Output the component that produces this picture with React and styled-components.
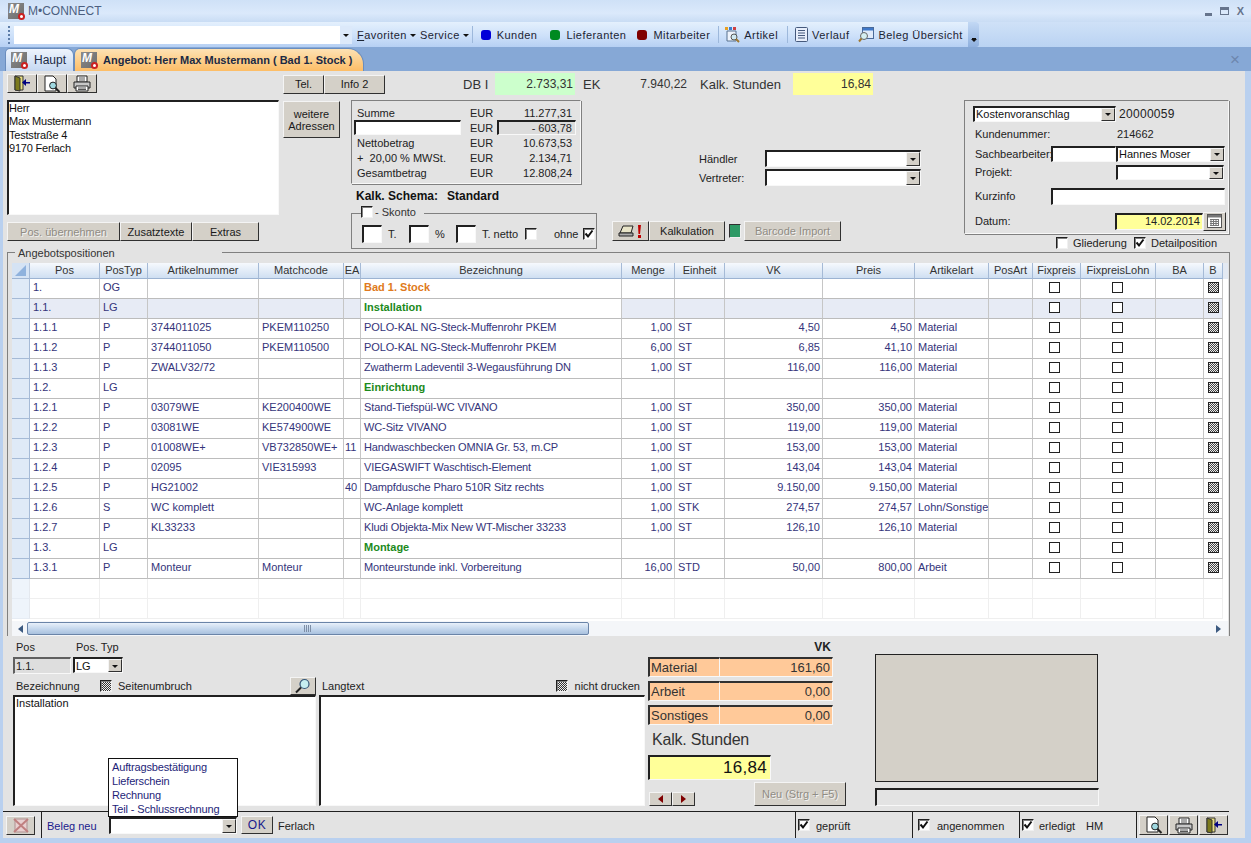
import React from "react";
import styled, { createGlobalStyle, css } from "styled-components";

const rows = [
  { pos: "1.", typ: "OG", bez: "Bad 1. Stock", kind: "title" },
  { pos: "1.1.", typ: "LG", bez: "Installation", kind: "group", active: true },
  { pos: "1.1.1", typ: "P", art: "3744011025", match: "PKEM110250", bez: "POLO-KAL NG-Steck-Muffenrohr PKEM", menge: "1,00", einheit: "ST", vk: "4,50", preis: "4,50", artart: "Material" },
  { pos: "1.1.2", typ: "P", art: "3744011050", match: "PKEM110500", bez: "POLO-KAL NG-Steck-Muffenrohr PKEM", menge: "6,00", einheit: "ST", vk: "6,85", preis: "41,10", artart: "Material" },
  { pos: "1.1.3", typ: "P", art: "ZWALV32/72", bez: "Zwatherm Ladeventil 3-Wegausführung DN", menge: "1,00", einheit: "ST", vk: "116,00", preis: "116,00", artart: "Material" },
  { pos: "1.2.", typ: "LG", bez: "Einrichtung", kind: "group" },
  { pos: "1.2.1", typ: "P", art: "03079WE", match: "KE200400WE", bez: "Stand-Tiefspül-WC VIVANO", menge: "1,00", einheit: "ST", vk: "350,00", preis: "350,00", artart: "Material" },
  { pos: "1.2.2", typ: "P", art: "03081WE", match: "KE574900WE", bez: "WC-Sitz VIVANO", menge: "1,00", einheit: "ST", vk: "119,00", preis: "119,00", artart: "Material" },
  { pos: "1.2.3", typ: "P", art: "01008WE+", match: "VB732850WE+", ea: "11", bez: "Handwaschbecken OMNIA Gr. 53, m.CP", menge: "1,00", einheit: "ST", vk: "153,00", preis: "153,00", artart: "Material" },
  { pos: "1.2.4", typ: "P", art: "02095", match: "VIE315993", bez: "VIEGASWIFT Waschtisch-Element", menge: "1,00", einheit: "ST", vk: "143,04", preis: "143,04", artart: "Material" },
  { pos: "1.2.5", typ: "P", art: "HG21002", ea: "40", bez: "Dampfdusche Pharo 510R Sitz rechts", menge: "1,00", einheit: "ST", vk: "9.150,00", preis: "9.150,00", artart: "Material" },
  { pos: "1.2.6", typ: "S", art: "WC komplett", bez: "WC-Anlage komplett", menge: "1,00", einheit: "STK", vk: "274,57", preis: "274,57", artart: "Lohn/Sonstige" },
  { pos: "1.2.7", typ: "P", art: "KL33233", bez: "Kludi Objekta-Mix New WT-Mischer 33233", menge: "1,00", einheit: "ST", vk: "126,10", preis: "126,10", artart: "Material" },
  { pos: "1.3.", typ: "LG", bez: "Montage", kind: "group" },
  { pos: "1.3.1", typ: "P", art: "Monteur", match: "Monteur", bez: "Monteurstunde inkl. Vorbereitung", menge: "16,00", einheit: "STD", vk: "50,00", preis: "800,00", artart: "Arbeit" },
];

const columns = [
  ["Pos", 70], ["PosTyp", 48], ["Artikelnummer", 111], ["Matchcode", 85], ["EA", 17],
  ["Bezeichnung", 261], ["Menge", 53], ["Einheit", 50], ["VK", 98], ["Preis", 92],
  ["Artikelart", 74], ["PosArt", 44], ["Fixpreis", 48], ["FixpreisLohn", 75], ["BA", 48], ["B", 19],
];

const Logo = () => (
  <LogoBox>
    <LogoLetter>M</LogoLetter>
    <LogoDot />
  </LogoBox>
);

const DoorIcon = () => (
  <svg width="20" height="17" viewBox="0 0 20 17">
    <path d="M3 1h8v14H3z" fill="#e6dc80" stroke="#333" />
    <path d="M3 1l5 2v13l-5-1z" fill="#7c7a1c" stroke="#333" />
    <path d="M18 7h-4V4L10 7.500 14 11V8.500h4z" fill="#000080" />
  </svg>
);

const PreviewIcon = () => (
  <svg width="20" height="18" viewBox="0 0 20 18">
    <path d="M3 1h8l3 3v12H3z" fill="#fff" stroke="#222" />
    <circle cx="11" cy="10.500" r="3.400" fill="#9fd8e0" stroke="#222" />
    <path d="M13.500 13l4 4" stroke="#222" strokeWidth="2" />
  </svg>
);

const PrinterIcon = () => (
  <svg width="20" height="17" viewBox="0 0 20 17">
    <path d="M5 1h10v6H5z" fill="#fff" stroke="#222" />
    <path d="M2 7h16v6H2z" fill="#c8c8c8" stroke="#222" />
    <path d="M4 11h12v5H4z" fill="#fff" stroke="#222" />
    <path d="M6 13h8M6 14.500h8M7 3h6M7 5h6" stroke="#555" />
  </svg>
);

const SearchIcon = () => (
  <svg width="18" height="16" viewBox="0 0 18 16">
    <circle cx="10.500" cy="6" r="4.500" fill="#c6eef0" stroke="#357" strokeWidth="1.200" />
    <path d="M7 9.500L2 14.500" stroke="#222" strokeWidth="2" />
  </svg>
);

const ArtikelIcon = () => (
  <svg width="17" height="17" viewBox="0 0 17 17">
    <path d="M3 5h9v10H3z" fill="#eef3fb" stroke="#56708f" />
    <rect x="1" y="1" width="3" height="3" fill="#e8a020" />
    <rect x="5" y="1" width="3" height="3" fill="#3a7fd0" />
    <rect x="9" y="1" width="3" height="3" fill="#d04040" />
    <circle cx="10" cy="11" r="3" fill="#d0e8f0" stroke="#555" />
    <path d="M12 13l3 3" stroke="#a07830" strokeWidth="2" />
  </svg>
);

const VerlaufIcon = () => (
  <svg width="15" height="17" viewBox="0 0 15 17">
    <rect x="1.500" y="1.500" width="12" height="14" rx="1" fill="#e7eefb" stroke="#45597c" />
    <path d="M4 4.500h7M4 7h7M4 9.500h7M4 12h7" stroke="#45597c" />
  </svg>
);

const BelegIcon = () => (
  <svg width="17" height="17" viewBox="0 0 17 17">
    <rect x="4.500" y="1.500" width="11" height="11" fill="#dfeafa" stroke="#4a6a99" />
    <path d="M5 2h10v2.500H5z" fill="#3f78c9" />
    <circle cx="6" cy="10" r="3.500" fill="#d5eef0" stroke="#666" />
    <path d="M3.500 12.500L1 15.500" stroke="#a07830" strokeWidth="2" />
  </svg>
);

const AlertIcon = () => (
  <svg width="27" height="15" viewBox="0 0 27 15">
    <path d="M3 9l3-7h10l-2 7z" fill="#e8e4c8" stroke="#222" />
    <path d="M2 9h14v3H2z" fill="#aaa" stroke="#222" />
    <path d="M21 1h3l-1 9h-1.500z" fill="#c00000" />
    <rect x="21" y="11" width="3" height="3" fill="#c00000" />
  </svg>
);

const CloseXIcon = () => (
  <svg width="16" height="15" viewBox="0 0 16 15">
    <rect x="2" y="1" width="12" height="13" fill="#e8d0d0" stroke="#b09090" />
    <path d="M1 1l14 13M15 1L1 14" stroke="#c08080" strokeWidth="2" />
  </svg>
);

const CalendarIcon = () => (
  <svg width="15" height="14" viewBox="0 0 15 14">
    <rect x="0.500" y="0.500" width="14" height="13" fill="#fff" stroke="#555" />
    <path d="M1 1h13v2.500H1z" fill="#777" />
    <path d="M3 5.500h9M3 7.500h9M3 9.500h9M3 11.500h9M4 5v7M6.500 5v7M9 5v7M11.500 5v7" stroke="#777" />
  </svg>
);

const Tick = () => (
  <svg width="10" height="10" viewBox="0 0 10 10">
    <path d="M1.500 4.500l2.500 3 4.500-6" fill="none" stroke="#111" strokeWidth="2" />
  </svg>
);

const Combo = ({ value, width, height }) => (
  <ComboBox $width={width} $height={height}>
    <ComboText>{value}</ComboText>
    <ComboArrow />
  </ComboBox>
);

const Check = ({ checked, pattern }) => (
  <CheckBox $pattern={pattern}>{checked && <Tick />}</CheckBox>
);

const App = () => {
  return (
    <Win>
      <GlobalStyle />
      <TitleBar>
        <Logo />
        <TitleText>M•CONNECT</TitleText>
        <WinControls>
          <WinMin />
          <WinMax />
          <WinClose>X</WinClose>
        </WinControls>
      </TitleBar>

      <ToolBar>
        <ToolTrack>
          <Grip />
          <ToolInput />
          <ToolDrop />
          <ToolItem $left={5}><u>F</u>avoriten<Caret /></ToolItem>
          <ToolItem $left={4}>Service<Caret /></ToolItem>
          <ToolSep $left={3} />
          <ToolDot $color="#0000d8" $left={8} />
          <ToolItem $left={6}>Kunden</ToolItem>
          <ToolDot $color="#008a20" $left={13} />
          <ToolItem $left={6}>Lieferanten</ToolItem>
          <ToolDot $color="#800000" $left={11} />
          <ToolItem $left={6}>Mitarbeiter</ToolItem>
          <ToolSep $left={8} />
          <ToolIconSlot $left={5}><ArtikelIcon /></ToolIconSlot>
          <ToolItem $left={3}>Artikel</ToolItem>
          <ToolSep $left={9} />
          <ToolIconSlot $left={6}><VerlaufIcon /></ToolIconSlot>
          <ToolItem $left={3}>Verlauf</ToolItem>
          <ToolIconSlot $left={9}><BelegIcon /></ToolIconSlot>
          <ToolItem $left={3}>Beleg Übersicht</ToolItem>
          <ToolEnd />
        </ToolTrack>
      </ToolBar>

      <TabStrip>
        <Tab>
          <Logo />
          <TabLabel>Haupt</TabLabel>
        </Tab>
        <Tab $active>
          <Logo />
          <TabLabel $active>Angebot: Herr Max Mustermann ( Bad 1. Stock )</TabLabel>
        </Tab>
        <TabClose>×</TabClose>
      </TabStrip>

      <Body>
        <Main>
          <TopForm>
            <LeftCol>
              <IconRow>
                <IconButton $width={30}><DoorIcon /></IconButton>
                <IconButton $width={30}><PreviewIcon /></IconButton>
                <IconButton $width={30}><PrinterIcon /></IconButton>
              </IconRow>
              <AddressBox>
                Herr<br />Max Mustermann<br />Teststraße 4<br />9170 Ferlach
              </AddressBox>
              <ActionRow>
                <Button $width={113} $height={19} $disabled>Pos. übernehmen</Button>
                <Button $width={72} $height={19}>Zusatztexte</Button>
                <Button $width={67} $height={19}>Extras</Button>
              </ActionRow>
            </LeftCol>

            <MidCol>
              <MetricRow>
                <Button $width={41} $height={19}>Tel.</Button>
                <Button $width={61} $height={19}>Info 2</Button>
                <MetricLabel $left={78} $width={32}>DB I</MetricLabel>
                <MetricValue $width={80} $bg="#ccffcc">2.733,31</MetricValue>
                <MetricLabel $left={8} $width={40}>EK</MetricLabel>
                <MetricValue $width={66}>7.940,22</MetricValue>
                <MetricLabel $left={11} $width={93}>Kalk. Stunden</MetricLabel>
                <MetricValue $width={80} $bg="#ffff99">16,84</MetricValue>
              </MetricRow>

              <LowerRow>
                <WeitereButton $width={57} $height={37}>weitere<br />Adressen</WeitereButton>
                <SummaryCol>
                  <SumBox>
                    <SumLabel>Summe</SumLabel><span>EUR</span><SumValue>11.277,31</SumValue>
                    <SumInput /><span>EUR</span><SumDiscount>- 603,78</SumDiscount>
                    <SumLabel>Nettobetrag</SumLabel><span>EUR</span><SumValue>10.673,53</SumValue>
                    <SumLabel>+&nbsp; 20,00 % MWSt.</SumLabel><span>EUR</span><SumValue>2.134,71</SumValue>
                    <SumLabel>Gesamtbetrag</SumLabel><span>EUR</span><SumValue>12.808,24</SumValue>
                  </SumBox>
                  <SchemaLine><b>Kalk. Schema:</b><b>Standard</b></SchemaLine>
                  <SkontoBox>
                    <SkontoLegend><Check />- Skonto</SkontoLegend>
                    <SmallInput /><SkontoText $width={27}>T.</SkontoText>
                    <SmallInput /><SkontoText $width={27}>%</SkontoText>
                    <SmallInput /><SkontoText $width={49}>T. netto</SkontoText>
                    <Check />
                    <SkontoText $width={35} $left={11}>ohne</SkontoText>
                    <Check checked />
                  </SkontoBox>
                </SummaryCol>
                <DealerCol>
                  <DealerRow>
                    <DealerLabel>Händler</DealerLabel>
                    <Combo width={156} height={17} />
                  </DealerRow>
                  <DealerRow>
                    <DealerLabel>Vertreter:</DealerLabel>
                    <Combo width={156} height={17} />
                  </DealerRow>
                  <CalcRow>
                    <Button $width={37} $height={20}><AlertIcon /></Button>
                    <Button $width={76} $height={20}>Kalkulation</Button>
                    <Led />
                    <Button $width={97} $height={20} $disabled>Barcode Import</Button>
                  </CalcRow>
                </DealerCol>
              </LowerRow>
            </MidCol>

            <RightCol>
              <DocBox>
                <DocRow $height={19}>
                  <Combo value="Kostenvoranschlag" width={143} height={16} />
                  <DocNumber>20000059</DocNumber>
                </DocRow>
                <DocRow $height={21}>
                  <DocLabel $width={144}>Kundenummer:</DocLabel>
                  <span>214662</span>
                </DocRow>
                <DocRow $height={19}>
                  <DocLabel>Sachbearbeiter:</DocLabel>
                  <DocInput $width={65} $height={16} />
                  <Combo value="Hannes Moser" width={109} height={16} />
                </DocRow>
                <DocRow $height={18}>
                  <DocLabel $width={143}>Projekt:</DocLabel>
                  <Combo width={108} height={15} />
                </DocRow>
                <DocRow $height={30}>
                  <DocLabel>Kurzinfo</DocLabel>
                  <DocInput $width={174} $height={17} />
                </DocRow>
                <DocRow $height={20}>
                  <DocLabel $width={142}>Datum:</DocLabel>
                  <DateInput>14.02.2014</DateInput>
                  <Button $width={23} $height={19}><CalendarIcon /></Button>
                </DocRow>
              </DocBox>
              <OptionRow>
                <Check />
                <OptionText $width={66}>Gliederung</OptionText>
                <Check checked />
                <OptionText>Detailposition</OptionText>
              </OptionRow>
            </RightCol>
          </TopForm>

          <GridGroup>
            <GridLegend>Angebotspositionen</GridLegend>
            <GridFrame>
              <Grid>
                <colgroup>
                  <col style={{ width: 18 }} />
                  {columns.map(([name, width]) => (
                    <col key={name} style={{ width }} />
                  ))}
                  <col />
                </colgroup>
                <thead>
                  <tr>
                    <Corner><CornerMark /></Corner>
                    {columns.map(([name]) => (
                      <HeadCell key={name}>{name}</HeadCell>
                    ))}
                    <FillerCell $head />
                  </tr>
                </thead>
                <tbody>
                  {rows.map((r) => (
                    <tr key={r.pos}>
                      <RowHead />
                      <Cell $shade={r.active}>{r.pos}</Cell>
                      <Cell $shade={r.active}>{r.typ}</Cell>
                      <Cell $shade={r.active}>{r.art}</Cell>
                      <Cell $shade={r.active}>{r.match}</Cell>
                      <Cell $shade={r.active} $tight>{r.ea}</Cell>
                      <Cell $kind={r.kind} $name>{r.bez}</Cell>
                      <Cell $shade={r.active} $right>{r.menge}</Cell>
                      <Cell $shade={r.active}>{r.einheit}</Cell>
                      <Cell $shade={r.active} $right>{r.vk}</Cell>
                      <Cell $shade={r.active} $right>{r.preis}</Cell>
                      <Cell $shade={r.active}>{r.artart}</Cell>
                      <Cell $shade={r.active} />
                      <CheckCell $shade={r.active} $shift={4}><GridCheck /></CheckCell>
                      <CheckCell $shade={r.active} $shift={2}><GridCheck /></CheckCell>
                      <Cell $shade={r.active} />
                      <CheckCell $shade={r.active} $shift={0}><GridCheck $pattern /></CheckCell>
                      <FillerCell />
                    </tr>
                  ))}
                  {[0, 1].map((i) => (
                    <tr key={i}>
                      <RowHead $empty />
                      {columns.map(([name]) => (
                        <Cell key={name} $empty />
                      ))}
                      <FillerCell />
                    </tr>
                  ))}
                </tbody>
              </Grid>
              <ScrollBar>
                <ScrollArrow $dir="left" />
                <ScrollThumb><ThumbGrip /></ScrollThumb>
                <ScrollArrow $dir="right" />
              </ScrollBar>
            </GridFrame>
          </GridGroup>

          <DetailArea>
            <DetailCol $width={303}>
              <PosLabels>
                <span>Pos</span>
                <span>Pos. Typ</span>
              </PosLabels>
              <PosFields>
                <PosBox>1.1.</PosBox>
                <Combo value="LG" width={50} height={16} />
              </PosFields>
              <FieldHead>
                <HeadLabel $width={87}>Bezeichnung</HeadLabel>
                <Check pattern />
                <HeadLabel $left={6}>Seitenumbruch</HeadLabel>
                <SearchButton $width={26} $height={18}><SearchIcon /></SearchButton>
              </FieldHead>
              <TextBox>Installation</TextBox>
            </DetailCol>

            <DetailCol $width={326} $left={3} $top={41}>
              <FieldHead>
                <HeadLabel $left={3}>Langtext</HeadLabel>
                <PushRight><Check pattern /></PushRight>
                <HeadLabel $left={7} $right={5}>nicht drucken</HeadLabel>
              </FieldHead>
              <TextBox />
            </DetailCol>

            <TotalsCol>
              <VkTitle>VK</VkTitle>
              <CostRow>
                <CostCell $width={72}>Material</CostCell>
                <CostCell $width={113} $right>161,60</CostCell>
              </CostRow>
              <CostRow>
                <CostCell $width={72}>Arbeit</CostCell>
                <CostCell $width={113} $right>0,00</CostCell>
              </CostRow>
              <CostRow>
                <CostCell $width={72}>Sonstiges</CostCell>
                <CostCell $width={113} $right>0,00</CostCell>
              </CostRow>
              <HoursLabel>Kalk. Stunden</HoursLabel>
              <HoursValue>16,84</HoursValue>
              <NavRow>
                <NavGroup>
                  <NavButton><NavArrow $dir="left" /></NavButton>
                  <NavButton><NavArrow $dir="right" /></NavButton>
                </NavGroup>
                <Button $width={92} $height={24} $disabled>Neu (Strg + F5)</Button>
              </NavRow>
            </TotalsCol>

            <PreviewCol>
              <PreviewBox />
              <PreviewBar />
            </PreviewCol>
          </DetailArea>

          <StatusBar>
            <StatusCell $width={37}>
              <Button $width={29} $height={19}><CloseXIcon /></Button>
            </StatusCell>
            <StatusCell $width={754} $divider>
              <BlueLabel>Beleg neu</BlueLabel>
              <ComboAnchor>
                <PopupList>
                  <li>Auftragsbestätigung</li>
                  <li>Lieferschein</li>
                  <li>Rechnung</li>
                  <li>Teil - Schlussrechnung</li>
                </PopupList>
                <Combo width={128} height={17} />
              </ComboAnchor>
              <OkButton $width={32} $height={18}>OK</OkButton>
              <PlainText $left={5}>Ferlach</PlainText>
            </StatusCell>
            <StatusCell $width={117} $divider>
              <Check checked />
              <PlainText $left={6}>geprüft</PlainText>
            </StatusCell>
            <StatusCell $width={107} $divider $pad={5}>
              <Check checked />
              <PlainText $left={7}>angenommen</PlainText>
            </StatusCell>
            <StatusCell $width={117} $divider>
              <Check checked />
              <PlainText $left={5}>erledigt</PlainText>
              <PlainText $left={11}>HM</PlainText>
            </StatusCell>
            <StatusCell $width={93} $divider>
              <StatusIcon $width={29}><PreviewIcon /></StatusIcon>
              <StatusIcon $width={29}><PrinterIcon /></StatusIcon>
              <StatusIcon $width={29}><DoorIcon /></StatusIcon>
            </StatusCell>
          </StatusBar>
        </Main>
      </Body>
    </Win>
  );
};

export default App;

const GlobalStyle = createGlobalStyle`
  html, body {
    margin: 0;
    padding: 0;
    background: #fff;
  }
  * {
    box-sizing: border-box;
  }
`;

const raised = css`
  border: 1px solid;
  border-color: #f4f4f4 #303030 #303030 #f4f4f4;
  background: #d4d0c8;
`;

const sunken = css`
  border-style: solid;
  border-width: 2px 1px 1px 2px;
  border-color: #202020 #f8f8f8 #f8f8f8 #202020;
`;

const Win = styled.div`
  position: relative;
  width: 1251px;
  height: 843px;
  overflow: hidden;
  display: flex;
  flex-direction: column;
  background: #b9d0ef;
  font-family: "Liberation Sans", Arial, sans-serif;
  font-size: 11px;
  color: #222;
`;

const TitleBar = styled.div`
  height: 22px;
  flex: none;
  display: flex;
  align-items: center;
  padding: 0 7px 0 8px;
  background: linear-gradient(#cfe1f7, #dbe9fb 60%, #c9dcf4);
`;

const LogoBox = styled.span`
  position: relative;
  display: inline-block;
  width: 16px;
  height: 16px;
  flex: none;
  background: linear-gradient(135deg, #8b8b8b, #6c6c6c);
  overflow: visible;
`;

const LogoLetter = styled.span`
  display: block;
  font: italic bold 12px/13px "Liberation Sans", sans-serif;
  color: #fff;
  padding-left: 1px;
`;

const LogoDot = styled.span`
  position: absolute;
  right: -1px;
  bottom: -1px;
  width: 7px;
  height: 7px;
  border-radius: 50%;
  background: #fff;
  border: 2px solid #cc2020;
`;

const TitleText = styled.span`
  margin-left: 4px;
  font-size: 12px;
  color: #4c5f80;
`;

const WinControls = styled.div`
  margin-left: auto;
  display: flex;
  align-items: center;
  gap: 8px;
`;

const WinMin = styled.span`
  width: 7px;
  height: 3px;
  margin-top: 7px;
  background: #66748c;
`;

const WinMax = styled.span`
  width: 9px;
  height: 8px;
  border: 1px solid #66748c;
  border-top-width: 3px;
`;

const WinClose = styled.span`
  font: bold 11px "Liberation Sans", sans-serif;
  color: #66748c;
`;

const ToolBar = styled.div`
  height: 25px;
  flex: none;
  background: linear-gradient(#cfe1f7, #bad3f3);
`;

const ToolTrack = styled.div`
  width: 979px;
  height: 25px;
  margin-left: 0;
  display: flex;
  align-items: center;
  padding-left: 8px;
  letter-spacing: 0.45px;
  color: #1c2433;
  background: linear-gradient(#e4f0fd, #cbdff9 60%, #b6d0f3);
  border-radius: 0 3px 3px 0;
  position: relative;
`;

const Grip = styled.span`
  width: 2px;
  height: 18px;
  background: repeating-linear-gradient(#5d7da8 0 2px, transparent 2px 4px);
`;

const ToolInput = styled.span`
  width: 326px;
  height: 18px;
  margin-left: 4px;
  background: #fff;
`;

const ToolDrop = styled.span`
  position: relative;
  width: 12px;
  height: 18px;
  background: #dce9fa;

  &::after {
    content: "";
    position: absolute;
    left: 3px;
    top: 8px;
    border: 3px solid transparent;
    border-top: 3px solid #111;
    border-bottom: none;
  }
`;

const ToolItem = styled.span`
  margin-left: ${(p) => p.$left || 0}px;
  white-space: nowrap;
`;

const Caret = styled.span`
  display: inline-block;
  margin-left: 3px;
  vertical-align: 2px;
  border: 3px solid transparent;
  border-top: 3px solid #111;
  border-bottom: none;
`;

const ToolSep = styled.span`
  width: 1px;
  height: 17px;
  margin-left: ${(p) => p.$left || 0}px;
  background: #9db8db;
`;

const ToolDot = styled.span`
  width: 10px;
  height: 10px;
  margin-left: ${(p) => p.$left || 0}px;
  border-radius: 3px;
  background: ${(p) => p.$color};
`;

const ToolIconSlot = styled.span`
  display: flex;
  margin-left: ${(p) => p.$left || 0}px;
`;

const ToolEnd = styled.span`
  position: absolute;
  right: 0;
  top: 0;
  bottom: 0;
  width: 11px;
  background: linear-gradient(#c2d8f4, #8fb0de);
  border-radius: 0 3px 3px 0;

  &::after {
    content: "";
    position: absolute;
    left: 3px;
    top: 17px;
    border: 3px solid transparent;
    border-top: 3px solid #111;
    border-bottom: none;
    box-shadow: 0 -2px 0 -1px #111;
  }
`;

const TabStrip = styled.div`
  height: 24px;
  flex: none;
  display: flex;
  align-items: flex-end;
  padding-left: 5px;
  background: #86a8d6;
`;

const Tab = styled.div`
  height: 23px;
  display: flex;
  align-items: center;
  gap: ${(p) => (p.$active ? "6px" : "7px")};
  padding: 0 ${(p) => (p.$active ? "11px" : "7px")} 0 ${(p) => (p.$active ? "6px" : "5px")};
  border-radius: ${(p) => (p.$active ? "6px 16px 0 0" : "5px 7px 0 0")};
  background: ${(p) =>
    p.$active
      ? "linear-gradient(#fde2b4, #fdbd66)"
      : "linear-gradient(#eef4fd, #c5d8f2)"};
  border: 1px solid #6a8dbe;
  border-bottom: none;
`;

const TabLabel = styled.span`
  color: #1b2a44;
  font-weight: ${(p) => (p.$active ? "bold" : "normal")};
  font-size: ${(p) => (p.$active ? "11px" : "12px")};
  white-space: nowrap;
`;

const TabClose = styled.span`
  margin-left: auto;
  margin-right: 11px;
  align-self: center;
  font-size: 17px;
  line-height: 17px;
  color: #6d86ad;
`;

const Body = styled.div`
  height: 767px;
  flex: none;
  margin: 0 6px 0 3px;
  background: #e3e3e3;
`;

const Main = styled.div`
  width: 1226px;
  height: 767px;
  display: flex;
  flex-direction: column;
`;

const TopForm = styled.div`
  height: 176px;
  flex: none;
  display: flex;
  padding-left: 4px;
`;

const LeftCol = styled.div`
  width: 272px;
  flex: none;
  padding-top: 3px;
`;

const IconRow = styled.div`
  display: flex;
  height: 19px;
`;

const IconButton = styled.button`
  ${raised}
  width: ${(p) => p.$width}px;
  height: 19px;
  padding: 0;
  display: flex;
  align-items: center;
  justify-content: center;
`;

const StatusIcon = styled(IconButton)`
  height: 20px;
  margin-right: 1px;
`;

const AddressBox = styled.div`
  ${sunken}
  height: 115px;
  margin-top: 7px;
  padding: 0;
  background: #fff;
  line-height: 13.300px;
  letter-spacing: -0.2px;
  color: #111;
`;

const ActionRow = styled.div`
  display: flex;
  margin-top: 7px;
`;

const Button = styled.button`
  ${raised}
  flex: none;
  width: ${(p) => p.$width}px;
  height: ${(p) => p.$height}px;
  padding: 0;
  display: inline-flex;
  align-items: center;
  justify-content: center;
  text-align: center;
  line-height: 14px;
  font: inherit;
  color: ${(p) => (p.$disabled ? "#908c84" : "#1a1a1a")};
  text-shadow: ${(p) => (p.$disabled ? "1px 1px 0 #f2f2f2" : "none")};
`;

const WeitereButton = styled(Button)`
  margin-top: 1px;
`;

const MidCol = styled.div`
  width: 677px;
  flex: none;
  margin-left: 4px;
  padding-top: 2px;
`;

const MetricRow = styled.div`
  display: flex;
  align-items: center;
  height: 22px;
`;

const MetricLabel = styled.span`
  width: ${(p) => p.$width}px;
  margin-left: ${(p) => p.$left || 0}px;
  font-size: 13px;
  color: #333;
  white-space: nowrap;
`;

const MetricValue = styled.span`
  width: ${(p) => p.$width}px;
  height: 22px;
  line-height: 22px;
  text-align: right;
  padding-right: 2px;
  font-size: 12px;
  color: #333;
  background: ${(p) => p.$bg || "transparent"};
`;

const LowerRow = styled.div`
  display: flex;
  margin-top: 5px;
  align-items: flex-start;
`;

const SummaryCol = styled.div`
  width: 246px;
  flex: none;
  margin-left: 11px;
`;

const SumBox = styled.div`
  width: 230px;
  height: 84px;
  padding: 4px 0 0 2px;
  display: grid;
  grid-template-columns: 116px 27px 79px;
  grid-auto-rows: 15px;
  align-items: center;
  border: 1px solid;
  border-color: #808080 #f8f8f8 #f8f8f8 #808080;
  box-shadow: 1px 1px 0 #808080;
`;

const SumLabel = styled.span`
  padding-left: 3px;
`;

const SumValue = styled.span`
  text-align: right;
  padding-right: 4px;
`;

const SumInput = styled.span`
  ${sunken}
  width: 107px;
  height: 15px;
  background: #fff;
`;

const SumDiscount = styled.span`
  ${sunken}
  height: 15px;
  line-height: 12px;
  text-align: right;
  padding-right: 3px;
  background: #dcdcdc;
`;

const SchemaLine = styled.div`
  display: flex;
  gap: 9px;
  height: 14px;
  margin: 5px 0 0 5px;
  font-size: 12px;
  color: #111;
  white-space: nowrap;

  b:first-child {
    width: 82px;
  }
`;

const SkontoBox = styled.div`
  position: relative;
  width: 246px;
  height: 36px;
  margin-top: 10px;
  padding: 5px 0 0 10px;
  display: flex;
  align-items: center;
  border: 1px solid #808080;
`;

const SkontoLegend = styled.div`
  position: absolute;
  left: 9px;
  top: -8px;
  display: flex;
  align-items: center;
  gap: 2px;
  padding-right: 8px;
  background: #e3e3e3;
  color: #333;
`;

const SmallInput = styled.span`
  ${sunken}
  width: 20px;
  height: 18px;
  background: #fff;
`;

const SkontoText = styled.span`
  width: ${(p) => p.$width}px;
  margin-left: ${(p) => p.$left || 0}px;
  padding-left: 6px;
  white-space: nowrap;
`;

const DealerCol = styled.div`
  margin-left: 15px;
  padding-top: 50px;
`;

const DealerRow = styled.div`
  display: flex;
  align-items: center;
  height: 17px;
  margin-bottom: 2px;
  margin-left: 87px;
`;

const DealerLabel = styled.span`
  width: 66px;
`;

const CalcRow = styled.div`
  display: flex;
  align-items: center;
  margin-top: 35px;
`;

const Led = styled.span`
  width: 12px;
  height: 14px;
  margin: 0 3px 0 4px;
  background: #2e9a66;
  border: 1px solid;
  border-color: #303030 #f0f0f0 #f0f0f0 #303030;
`;

const ComboBox = styled.div`
  ${sunken}
  flex: none;
  width: ${(p) => p.$width}px;
  height: ${(p) => p.$height}px;
  display: flex;
  align-items: center;
  background: #fff;
  overflow: hidden;
`;

const ComboText = styled.span`
  flex: 1;
  padding-left: 1px;
  line-height: 12px;
  white-space: nowrap;
  color: #111;
`;

const ComboArrow = styled.span`
  position: relative;
  width: 14px;
  height: 100%;
  flex: none;
  border: 1px solid;
  border-color: #f4f4f4 #303030 #303030 #f4f4f4;
  background: #d4d0c8;

  &::after {
    content: "";
    position: absolute;
    left: 3px;
    top: 50%;
    margin-top: -1px;
    border: 3px solid transparent;
    border-top: 3px solid #111;
    border-bottom: none;
  }
`;

const CheckBox = styled.span`
  flex: none;
  width: 12px;
  height: 12px;
  display: inline-flex;
  align-items: center;
  justify-content: center;
  border: 1px solid;
  border-color: #202020 #f0f0f0 #f0f0f0 #202020;
  box-shadow: inset 1px 1px 0 #808080;
  background: ${(p) =>
    p.$pattern
      ? "repeating-conic-gradient(#333 0 25%, #eee 0 50%) 0 0 / 2px 2px"
      : "#fff"};
`;

const RightCol = styled.div`
  width: 265px;
  flex: none;
  margin-left: 4px;
  padding-top: 29px;
`;

const DocBox = styled.div`
  width: 265px;
  height: 134px;
  padding: 3px 1px 0 8px;
  border: 1px solid;
  border-color: #808080 #f8f8f8 #f8f8f8 #808080;
  box-shadow: 1px 1px 0 #808080;
`;

const DocRow = styled.div`
  display: flex;
  align-items: center;
  height: ${(p) => p.$height}px;
`;

const DocNumber = styled.span`
  margin-left: 3px;
  font-size: 12px;
  letter-spacing: 0.3px;
`;

const DocLabel = styled.span`
  width: ${(p) => p.$width || 78}px;
  padding-left: 2px;
  flex: none;
  white-space: nowrap;
`;

const DocInput = styled.span`
  ${sunken}
  flex: none;
  width: ${(p) => p.$width}px;
  height: ${(p) => p.$height}px;
  background: #fff;
`;

const DateInput = styled.span`
  ${sunken}
  width: 88px;
  height: 17px;
  line-height: 13px;
  padding-right: 2px;
  text-align: right;
  background: #ffff99;
`;

const OptionRow = styled.div`
  display: flex;
  align-items: center;
  height: 14px;
  margin-top: 2px;
  padding-left: 92px;
`;

const OptionText = styled.span`
  width: ${(p) => (p.$width ? `${p.$width}px` : "auto")};
  padding-left: 5px;
  white-space: nowrap;
`;

const GridGroup = styled.section`
  position: relative;
  height: 384px;
  flex: none;
  margin: 5px -1px 0 4px;
  padding: 10px 0 0 4px;
  border: 1px solid #808080;
  border-bottom: none;
`;

const GridLegend = styled.span`
  position: absolute;
  left: 7px;
  top: -6px;
  padding: 0 107px 0 3px;
  background: #e3e3e3;
  color: #333;
`;

const GridFrame = styled.div`
  width: 1216px;
  height: 373px;
  display: flex;
  flex-direction: column;
  background: #fff;
`;

const Grid = styled.table`
  width: 1216px;
  table-layout: fixed;
  border-collapse: separate;
  border-spacing: 0;
  font: inherit;
`;

const HeadCell = styled.th`
  height: 16px;
  padding: 0 0 2px;
  font-weight: normal;
  text-align: center;
  color: #333;
  white-space: nowrap;
  overflow: hidden;
  background: linear-gradient(#f6f9fd, #cfdff2);
  border-right: 1px solid #a5bad6;
  border-bottom: 1px solid #9cb3d2;
`;

const Corner = styled(HeadCell)`
  position: relative;
  background: #d5e3f4;
`;

const CornerMark = styled.span`
  position: absolute;
  right: 3px;
  bottom: 2px;
  border-style: solid;
  border-width: 0 0 11px 11px;
  border-color: transparent transparent #8fb2dd transparent;
`;

const RowHead = styled.td`
  height: 20px;
  padding: 0;
  background: ${(p) => (p.$empty ? "#eef4fb" : "#dfeaf7")};
  border-right: 1px solid ${(p) => (p.$empty ? "#e4e8ee" : "#a5bad6")};
  border-bottom: 1px solid ${(p) => (p.$empty ? "#e6ecf4" : "#a5bad6")};
`;

const Cell = styled.td`
  height: 20px;
  padding: 0 ${(p) => (p.$right ? "2px" : 0)} 3px ${(p) => (p.$tight ? "1px" : p.$right ? 0 : "3px")};
  overflow: hidden;
  white-space: nowrap;
  text-align: ${(p) => (p.$right ? "right" : "left")};
  color: #34347a;
  letter-spacing: ${(p) => (p.$name && !p.$kind ? "-0.12px" : "normal")};
  background: ${(p) => (p.$shade ? "#e7ebf5" : "#fff")};
  border-right: 1px solid ${(p) => (p.$empty ? "#efefef" : "#c6c6c6")};
  border-bottom: 1px solid ${(p) => (p.$empty ? "#efefef" : "#bcbcbc")};
  ${(p) =>
    p.$kind === "title" &&
    css`
      color: #e07a20;
      font-weight: bold;
    `}
  ${(p) =>
    p.$kind === "group" &&
    css`
      color: #1c8a1c;
      font-weight: bold;
    `}
`;

const CheckCell = styled(Cell)`
  padding: 0 ${(p) => p.$shift}px 3px 0;
  text-align: center;
`;

const FillerCell = styled.td`
  padding: 0;
  background: ${(p) => (p.$head ? "#e3e9f2" : "#fff")};
`;

const GridCheck = styled.span`
  display: inline-block;
  width: 11px;
  height: 11px;
  vertical-align: middle;
  border: 1px solid #222;
  background: ${(p) =>
    p.$pattern ? "repeating-conic-gradient(#444 0 25%, #eee 0 50%) 0 0 / 2px 2px" : "#fff"};
`;

const ScrollBar = styled.div`
  height: 15px;
  margin-top: 2px;
  flex: none;
  display: flex;
  align-items: center;
  padding: 0 7px 0 6px;
  background: #f4f6f9;
`;

const ScrollArrow = styled.span`
  flex: none;
  width: 0;
  height: 0;
  border-style: solid;
  border-width: 4px 5px;
  border-color: transparent;
  ${(p) =>
    p.$dir === "left"
      ? css`
          border-right-color: #3c5a80;
          border-left-width: 0;
        `
      : css`
          border-left-color: #3c5a80;
          border-right-width: 0;
          margin-left: auto;
        `}
`;

const ScrollThumb = styled.div`
  width: 562px;
  height: 13px;
  margin-left: 4px;
  display: flex;
  align-items: center;
  justify-content: center;
  border: 1px solid #6a84a8;
  border-radius: 2px;
  background: linear-gradient(#e8f0fa, #c3d6ec 55%, #a9c1de);
`;

const ThumbGrip = styled.span`
  width: 8px;
  height: 7px;
  background: repeating-linear-gradient(90deg, #7d8ea6 0 1px, transparent 1px 2px);
`;

const DetailArea = styled.div`
  height: 175px;
  flex: none;
  display: flex;
  padding-left: 10px;
`;

const DetailCol = styled.div`
  width: ${(p) => p.$width}px;
  flex: none;
  margin-left: ${(p) => p.$left || 0}px;
  padding-top: ${(p) => p.$top || 0}px;
  display: flex;
  flex-direction: column;
`;

const PosLabels = styled.div`
  display: flex;
  height: 15px;
  margin-top: 5px;
  padding-left: 3px;

  span:first-child {
    width: 60px;
  }
`;

const PosFields = styled.div`
  display: flex;
  align-items: flex-start;
  gap: 2px;
  height: 20px;
  margin-top: 1px;
`;

const PosBox = styled.span`
  width: 58px;
  height: 17px;
  line-height: 14px;
  padding-left: 1px;
  background: #dedede;
  border: 1px solid;
  border-width: 2px 1px 1px 2px;
  border-color: #606060 #f8f8f8 #f8f8f8 #606060;
`;

const FieldHead = styled.div`
  display: flex;
  align-items: center;
  height: 18px;
  color: #222;
`;

const HeadLabel = styled.span`
  width: ${(p) => (p.$width ? `${p.$width}px` : "auto")};
  margin-left: ${(p) => p.$left || 0}px;
  margin-right: ${(p) => p.$right || 0}px;
  padding-left: ${(p) => (p.$width ? "3px" : 0)};
  white-space: nowrap;
`;

const PushRight = styled.span`
  margin-left: auto;
  display: flex;
`;

const SearchButton = styled(Button)`
  margin-left: auto;
`;

const TextBox = styled.div`
  ${sunken}
  height: 111px;
  padding-left: 1px;
  line-height: 13px;
  background: #fff;
  color: #111;
`;

const TotalsCol = styled.div`
  width: 198px;
  flex: none;
  margin-left: 3px;
`;

const VkTitle = styled.div`
  width: 185px;
  height: 14px;
  margin-top: 4px;
  padding-right: 2px;
  text-align: right;
  font-size: 12px;
  font-weight: bold;
`;

const CostRow = styled.div`
  display: flex;
  height: 20px;
  margin: 3px 0 4px;
`;

const CostCell = styled.span`
  width: ${(p) => p.$width}px;
  line-height: 17px;
  font-size: 13px;
  padding: 0 ${(p) => (p.$right ? "2px" : 0)} 0 1px;
  text-align: ${(p) => (p.$right ? "right" : "left")};
  background: #ffc999;
  color: #333;
  border-style: solid;
  border-width: 2px 1px 1px ${(p) => (p.$right ? 0 : "2px")};
  border-color: #303030 #f8f8f8 #f8f8f8 #303030;
`;

const HoursLabel = styled.div`
  height: 18px;
  margin: 6px 0 6px 4px;
  line-height: 18px;
  font-size: 16px;
  letter-spacing: -0.2px;
  color: #333;
`;

const HoursValue = styled.div`
  ${sunken}
  width: 123px;
  height: 25px;
  line-height: 22px;
  padding-right: 3px;
  text-align: right;
  font-size: 17px;
  letter-spacing: 0.3px;
  background: #ffff99;
  color: #111;
`;

const NavRow = styled.div`
  display: flex;
  align-items: flex-end;
  justify-content: space-between;
  height: 26px;
  margin-top: 0;
  padding-left: 1px;
`;

const NavGroup = styled.div`
  display: flex;
`;

const NavButton = styled.span`
  ${raised}
  width: 23px;
  height: 14px;
  display: flex;
  align-items: center;
  justify-content: center;
`;

const NavArrow = styled.span`
  border-style: solid;
  border-width: 4px 5px;
  border-color: transparent;
  ${(p) =>
    p.$dir === "left"
      ? css`
          border-right-color: #800000;
          border-left-width: 0;
        `
      : css`
          border-left-color: #800000;
          border-right-width: 0;
        `}
`;

const PreviewCol = styled.div`
  width: 223px;
  flex: none;
  margin-left: 29px;
  padding-top: 18px;
`;

const PreviewBox = styled.div`
  width: 223px;
  height: 128px;
  background: #d4d0c8;
  border: 1px solid #222;
`;

const PreviewBar = styled.div`
  ${sunken}
  width: 224px;
  height: 18px;
  margin-top: 6px;
  background: #e3e3e3;
`;

const StatusBar = styled.div`
  height: 27px;
  flex: none;
  display: flex;
  border-top: 1px solid #202020;
  margin-top: 0;
  padding-left: 1px;
`;

const StatusCell = styled.div`
  flex: none;
  width: ${(p) => p.$width}px;
  display: flex;
  align-items: center;
  padding-left: ${(p) => p.$pad ?? 2}px;
  border-left: ${(p) => (p.$divider ? "1px solid #202020" : "none")};
`;

const BlueLabel = styled.span`
  width: 65px;
  padding: 1px 0 0 3px;
  color: #1a1a8c;
`;

const ComboAnchor = styled.div`
  position: relative;
`;

const PopupList = styled.ul`
  position: absolute;
  left: -1px;
  bottom: 100%;
  width: 130px;
  height: 59px;
  margin: 0;
  padding: 1px 0 0 3px;
  list-style: none;
  line-height: 14px;
  letter-spacing: -0.15px;
  background: #fff;
  border: 1px solid #111;
  color: #1e1e78;
  white-space: nowrap;
  z-index: 2;
`;

const OkButton = styled(Button)`
  margin-left: 4px;
  font-size: 12px;
  color: #1a1a8c;
  letter-spacing: 0.5px;
`;

const PlainText = styled.span`
  margin-left: ${(p) => p.$left || 0}px;
  padding-top: 1px;
  white-space: nowrap;
`;
